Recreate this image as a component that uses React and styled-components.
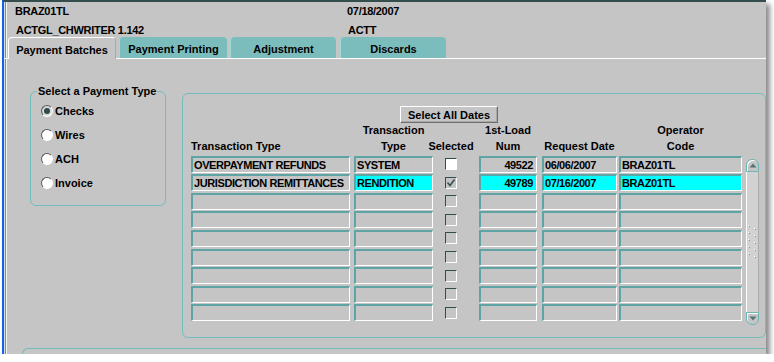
import React from 'react';
import styled, { createGlobalStyle } from 'styled-components';

const GlobalStyle = createGlobalStyle`
  html, body {
    margin: 0;
    padding: 0;
    background: #fff;
  }
  body {
    font-family: "Liberation Sans", Arial, sans-serif;
    font-size: 11px;
    font-weight: bold;
    color: #000;
  }
`;

const Window = styled.div`
  margin-left: 2px;
  width: 762px;
  height: 352px;
  border-left: 2px solid #1262f0;
  border-top: 2px solid #344e4e;
  background: #c5c5c5;
  box-shadow: inset 1px 0 0 #dcdcdc, inset 2px 0 0 #7e8c8c, inset 3px 0 0 #f4f4f4,
    4px 4px 5px rgba(0, 0, 0, 0.45);
  overflow: hidden;
  display: flex;
  flex-direction: column;
`;

const Header = styled.div`
  flex-shrink: 0;
  display: grid;
  grid-template-columns: 332px 1fr;
  grid-template-rows: 19px 16px;
  line-height: 19px;
  padding-left: 11px;
  letter-spacing: -0.3px;
  white-space: nowrap;
`;

const HeaderCell = styled.div`
  padding-left: ${p => (p.$indent ? 1 : 0)}px;
`;

const TabBar = styled.div`
  flex-shrink: 0;
  display: flex;
  height: 21px;
  padding-left: 4px;
  border-bottom: 1px solid #fff;
`;

const Tab = styled.div`
  width: ${p => p.$w}px;
  margin-left: ${p => p.$gap}px;
  box-sizing: border-box;
  display: flex;
  align-items: center;
  justify-content: center;
  padding-top: 2px;
  border-radius: 4px 4px 0 0;
  white-space: nowrap;
  background: ${p => (p.$active ? '#c5c5c5' : '#7bbdbd')};
  ${p =>
    p.$active
      ? `
    border: 1px solid #fff;
    border-right-color: #a8a8a8;
    border-bottom: none;
    margin-bottom: -1px;
    position: relative;
    z-index: 1;
  `
      : `
    border-left: 1px solid #a6d6d6;
  `}
`;

const Content = styled.div`
  flex: 1;
  min-height: 0;
  display: flex;
  flex-direction: column;
`;

const MainRow = styled.div`
  flex-shrink: 0;
  display: flex;
  align-items: flex-start;
`;

const TypeBox = styled.fieldset`
  margin: 24px 0 0 26px;
  width: 136px;
  min-width: 0;
  box-sizing: border-box;
  flex-shrink: 0;
  padding: 0 0 10px 0;
  border: 1px solid #74bcbc;
  border-radius: 6px;
`;

const Legend = styled.legend`
  margin-left: 6px;
  padding: 0 1px;
  line-height: 16px;
  white-space: nowrap;
`;

const RadioRow = styled.div`
  display: flex;
  align-items: center;
  gap: 2px;
  height: 24px;
  padding-left: 10px;
`;

const Radio = styled.span`
  width: 12px;
  height: 12px;
  box-sizing: border-box;
  border-radius: 50%;
  border: 1px solid;
  border-color: #5c5c5c #fff #fff #5c5c5c;
  background: ${p => (p.$on ? '#d8d8d8' : '#fff')};
  display: flex;
  align-items: center;
  justify-content: center;
  &::after {
    content: '';
    width: 6px;
    height: 6px;
    border-radius: 50%;
    background: ${p => (p.$on ? '#2f4a4a' : 'transparent')};
  }
`;

const Frame = styled.div`
  margin: 34px 0 0 16px;
  width: 584px;
  height: 245px;
  box-sizing: border-box;
  flex-shrink: 0;
  border: 1px solid #74bcbc;
  border-radius: 6px;
  padding: 12px 0 0 8px;
`;

const SelectButton = styled.button`
  margin-left: 209px;
  width: 98px;
  height: 17px;
  box-sizing: border-box;
  padding: 0;
  font: inherit;
  color: #000;
  background: #c5c5c5;
  border: 1px solid;
  border-color: #fff #6e6e6e #6e6e6e #fff;
  box-shadow: inset -1px -1px 0 #a9a9a9;
  display: block;
  white-space: nowrap;
`;

const Table = styled.div`
  margin-top: -1px;
  display: grid;
  grid-template-columns: 163px 79px 36px 68px 80px 125px 17px;
  grid-template-rows: 32px repeat(9, 17px);
  row-gap: 1.6px;
`;

const HeadCell = styled.div`
  align-self: end;
  justify-self: ${p => p.$justify || 'center'};
  width: ${p => (p.$w ? `${p.$w}px` : 'max-content')};
  text-align: ${p => (p.$justify === 'start' ? 'left' : 'center')};
  line-height: 16px;
  white-space: nowrap;
`;

const Field = styled.div`
  box-sizing: border-box;
  height: 17px;
  width: ${p => p.$w}px;
  justify-self: ${p => (p.$end ? 'end' : 'start')};
  border-style: solid;
  border-width: 2px 1px 1px 2px;
  border-color: #5ea4a4 #fff #fff #5ea4a4;
  background: ${p => (p.$hi ? '#00ffff' : 'transparent')};
  padding: ${p => (p.$right ? '0 3px 0 0' : '0 0 0 1px')};
  text-align: ${p => (p.$right ? 'right' : 'left')};
  line-height: 14px;
  letter-spacing: -0.4px;
  white-space: nowrap;
  overflow: hidden;
`;

const Check = styled.div`
  justify-self: center;
  align-self: center;
  width: 12px;
  height: 12px;
  box-sizing: border-box;
  border: 1px solid;
  border-color: #2f4f4f #fff #fff #2f4f4f;
  background: ${p => (p.$white ? '#fff' : '#c5c5c5')};
  display: flex;
  align-items: center;
  justify-content: center;
`;

const ScrollBar = styled.div`
  grid-column: 7;
  grid-row: 2 / span 9;
  justify-self: end;
  align-self: start;
  margin-top: 3px;
  width: 13px;
  height: 166px;
  display: flex;
  flex-direction: column;
`;

const ScrollBtn = styled.div`
  height: 13px;
  box-sizing: border-box;
  border: 1px solid #6cb6b6;
  border-radius: ${p => (p.$up ? '6px 6px 0 0' : '0 0 6px 6px')};
  background: #c5c5c5;
  box-shadow: inset 1px 1px 0 #fff;
  display: flex;
  align-items: center;
  justify-content: center;
`;

const Track = styled.div`
  flex: 1;
  background: #d2d2d2;
  border-left: 1px solid #fff;
  border-right: 1px solid #aaa;
  display: flex;
  align-items: center;
  justify-content: center;
`;

const BottomFrame = styled.div`
  flex-shrink: 0;
  margin: 10px 0 0 18px;
  height: 20px;
  border-top: 1px solid #74bcbc;
  border-left: 1px solid #74bcbc;
  border-top-left-radius: 6px;
`;

const tabs = [
  { label: 'Payment Batches', w: 108, gap: 0, active: true },
  { label: 'Payment Printing', w: 108, gap: 3 },
  { label: 'Adjustment', w: 106, gap: 3 },
  { label: 'Discards', w: 106, gap: 4 },
];

const paymentTypes = ['Checks', 'Wires', 'ACH', 'Invoice'];

const rows = [
  { type: 'OVERPAYMENT REFUNDS', tt: 'SYSTEM', white: true, num: '49522', date: '06/06/2007', op: 'BRAZ01TL' },
  { type: 'JURISDICTION REMITTANCES', tt: 'RENDITION', sel: true, hi: true, num: '49789', date: '07/16/2007', op: 'BRAZ01TL' },
  ...Array.from({ length: 7 }, () => ({})),
];

const Tick = () => (
  <svg width="10" height="10" viewBox="0 0 10 10">
    <path d="M1.5 4.5 L4 7.5 L8.5 1.5" fill="none" stroke="#344e4e" strokeWidth="1.6" />
  </svg>
);

const Arrow = ({ up }) => (
  <svg width="8" height="5" viewBox="0 0 8 5">
    <path d={up ? 'M0.5 4.5 L4 0.5 L7.5 4.5 Z' : 'M0.5 0.5 L4 4.5 L7.5 0.5 Z'} fill="#557474" />
  </svg>
);

const Grip = () => (
  <svg width="9" height="34" viewBox="0 0 9 34">
    {[0, 1, 2, 3, 4].map(i => (
      <g key={i}>
        <rect x="0" y={i * 7} width="1" height="1" fill="#fff" />
        <rect x="1" y={i * 7 + 1} width="1" height="1" fill="#5ea4a4" />
        <rect x="6" y={i * 7 + 3} width="1" height="1" fill="#fff" />
        <rect x="7" y={i * 7 + 4} width="1" height="1" fill="#5ea4a4" />
      </g>
    ))}
  </svg>
);

export default function App() {
  return (
    <>
      <GlobalStyle />
      <Window>
        <Header>
          <HeaderCell>BRAZ01TL</HeaderCell>
          <HeaderCell>07/18/2007</HeaderCell>
          <HeaderCell $indent>ACTGL_CHWRITER 1.142</HeaderCell>
          <HeaderCell $indent>ACTT</HeaderCell>
        </Header>
        <TabBar>
          {tabs.map(t => (
            <Tab key={t.label} $w={t.w} $gap={t.gap} $active={t.active}>
              {t.label}
            </Tab>
          ))}
        </TabBar>
        <Content>
          <MainRow>
            <TypeBox>
              <Legend>Select a Payment Type</Legend>
              {paymentTypes.map((p, i) => (
                <RadioRow key={p}>
                  <Radio $on={i === 0} />
                  {p}
                </RadioRow>
              ))}
            </TypeBox>
            <Frame>
              <SelectButton>Select All Dates</SelectButton>
              <Table>
                <HeadCell $justify="start">Transaction Type</HeadCell>
                <HeadCell>Transaction<br />Type</HeadCell>
                <HeadCell>Selected</HeadCell>
                <HeadCell $justify="end" $w={58}>1st-Load<br />Num</HeadCell>
                <HeadCell $justify="end" $w={75}>Request Date</HeadCell>
                <HeadCell $justify="end" $w={123}>Operator<br />Code</HeadCell>
                <div />
                {rows.map((r, i) => (
                  <React.Fragment key={i}>
                    <Field $w={159}>{r.type}</Field>
                    <Field $w={79} $hi={r.hi}>{r.tt}</Field>
                    <Check $white={r.white}>{r.sel && <Tick />}</Check>
                    <Field $w={58} $end $right $hi={r.hi}>{r.num}</Field>
                    <Field $w={75} $end $hi={r.hi}>{r.date}</Field>
                    <Field $w={123} $end $hi={r.hi}>{r.op}</Field>
                  </React.Fragment>
                ))}
                <ScrollBar>
                  <ScrollBtn $up><Arrow up /></ScrollBtn>
                  <Track><Grip /></Track>
                  <ScrollBtn><Arrow /></ScrollBtn>
                </ScrollBar>
              </Table>
            </Frame>
          </MainRow>
          <BottomFrame />
        </Content>
      </Window>
    </>
  );
}
